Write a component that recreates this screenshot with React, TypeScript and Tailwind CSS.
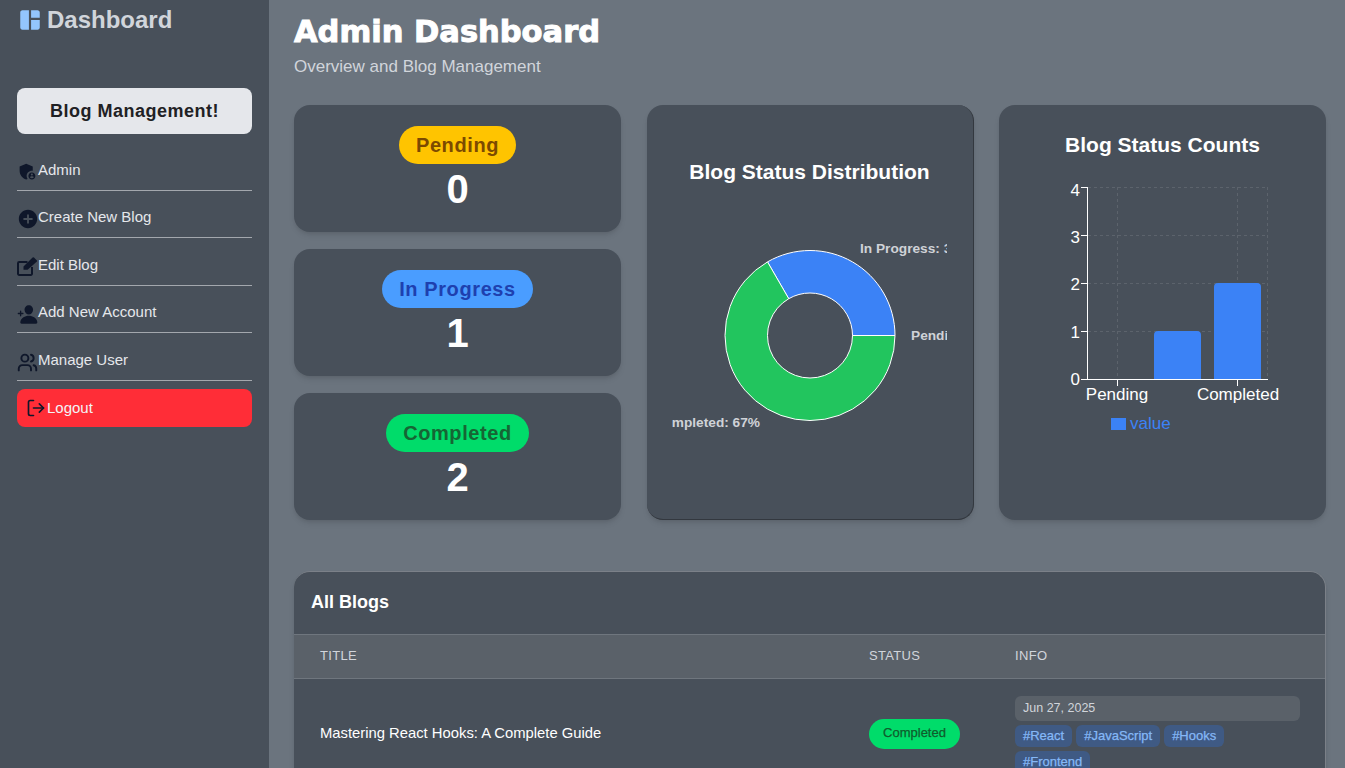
import React from "react";
import { MdSpaceDashboard, MdAdminPanelSettings, MdAddCircle } from "react-icons/md";
import { IoPersonAdd } from "react-icons/io5";
import { LuUsers, LuLogOut } from "react-icons/lu";

function EditIcon() {
  return (
    <svg viewBox="0 0 21 19" className="w-[21px] h-[19px] shrink-0" fill="none">
      <path d="M10.5 5H2.2A1.2 1.2 0 0 0 1 6.2v10.6A1.2 1.2 0 0 0 2.2 18h11.6a1.2 1.2 0 0 0 1.2-1.2V10" stroke="currentColor" strokeWidth="2" />
      <path d="M6.5 12.8V9.6L15.6.6a1 1 0 0 1 1.4 0l2.7 2.7a1 1 0 0 1 0 1.4l-9.1 8.1Z" fill="currentColor" />
    </svg>
  );
}

const menu = [
  { label: "Admin", icon: <MdAdminPanelSettings className="w-[21px] h-[21px] shrink-0" /> },
  { label: "Create New Blog", icon: <MdAddCircle className="w-[22px] h-[22px] -ml-[0.5px] -mr-[0.5px] shrink-0" /> },
  { label: "Edit Blog", icon: <EditIcon /> },
  { label: "Add New Account", icon: <IoPersonAdd className="w-[21px] h-[21px] shrink-0" /> },
  { label: "Manage User", icon: <LuUsers className="w-[21px] h-[21px] shrink-0" strokeWidth={2.2} /> },
];

const stats = [
  { label: "Pending", count: 0, pill: "bg-[#ffc400] text-[#7c4a00]" },
  { label: "In Progress", count: 1, pill: "bg-[#4a9dff] text-[#1e40af]" },
  { label: "Completed", count: 2, pill: "bg-[#00dc6a] text-[#166534]" },
];

const tags = ["#React", "#JavaScript", "#Hooks", "#Frontend"];

function Sidebar() {
  return (
    <aside className="w-[269px] shrink-0 bg-[#48505a] px-[17px]">
      <div className="flex items-center gap-[4px] h-[40px] text-[#d1d5db]">
        <MdSpaceDashboard className="w-[26px] h-[26px] text-[#93c5fd] shrink-0" />
        <span className="text-2xl font-bold">Dashboard</span>
      </div>
      <div className="mt-[48px] h-[46px] flex items-center justify-center rounded-lg bg-[#e5e7eb] text-lg font-bold tracking-[0.5px] text-[#1f2124]">
        Blog Management!
      </div>
      <div className="mt-[9px]">
        {menu.map((item) => (
          <div
            key={item.label}
            className="h-[47.6px] flex items-center border-b border-[#a3a7ad] text-[15px] text-[#e5e7eb] pt-[9px]"
          >
            <span className="text-[#0f172a] translate-y-[1px]">{item.icon}</span>
            <span className="-translate-y-[1px]">{item.label}</span>
          </div>
        ))}
      </div>
      <div className="mt-[8px] h-[38px] flex items-center gap-[1px] pl-[9px] rounded-lg bg-[#ff2d37] text-[15px] text-[#f3f4f6]">
        <LuLogOut className="w-[20px] h-[20px] text-[#0f172a] shrink-0" />
        <span>Logout</span>
      </div>
    </aside>
  );
}

function StatCard({ label, count, pill }: { label: string; count: number; pill: string }) {
  return (
    <div className="h-[127px] rounded-2xl bg-[#48505a] shadow-md flex flex-col items-center pt-[21px]">
      <span className={`h-[38px] px-[17px] flex items-center rounded-full text-xl font-bold tracking-[0.6px] ${pill}`}>
        {label}
      </span>
      <span className="text-[40px] leading-[50px] font-bold text-white">{count}</span>
    </div>
  );
}

function DonutChart() {
  return (
    <svg width="275" height="250" viewBox="672 210 275 250" className="block">
      <path d="M895 335.5A85 85 0 0 0 767.5 261.9L788.75 298.7A42.5 42.5 0 0 1 852.5 335.5Z" fill="#3b82f6" stroke="#fff" strokeWidth="1" />
      <path d="M767.5 261.9A85 85 0 1 0 895 335.5L852.5 335.5A42.5 42.5 0 1 1 788.75 298.7Z" fill="#22c55e" stroke="#fff" strokeWidth="1" />
      <g fontSize="13.7" fontWeight="700" fill="#cfd2d7" fontFamily="'Liberation Sans', sans-serif">
        <text x="860" y="253">In Progress: 33%</text>
        <text x="911" y="340">Pending: 0%</text>
        <text x="760" y="427" textAnchor="end">Completed: 67%</text>
      </g>
    </svg>
  );
}

function BarChart() {
  const gridY = [187.5, 235.5, 283.5, 331.5];
  const gridX = [1117.5, 1237.5, 1267.5];
  const yLabels = [
    { t: "4", y: 196 },
    { t: "3", y: 243 },
    { t: "2", y: 290 },
    { t: "1", y: 338 },
    { t: "0", y: 385 },
  ];
  return (
    <svg width="240" height="260" viewBox="1050 178 240 260" className="block">
      <g stroke="#5c636c" strokeDasharray="3 3">
        {gridY.map((y) => <line key={y} x1="1088" x2="1268" y1={y} y2={y} />)}
        {gridX.map((x) => <line key={x} x1={x} x2={x} y1="187" y2="379" />)}
      </g>
      <path d="M1154 379v-44a4 4 0 0 1 4-4h39a4 4 0 0 1 4 4v44Z" fill="#3b82f6" />
      <path d="M1214 379v-92a4 4 0 0 1 4-4h39a4 4 0 0 1 4 4v92Z" fill="#3b82f6" />
      <g stroke="#fff" strokeWidth="1">
        <line x1="1087.5" x2="1087.5" y1="187" y2="380" />
        <line x1="1087" x2="1268" y1="379.5" y2="379.5" />
        {[187.5, 235.5, 283.5, 331.5, 379.5].map((y) => <line key={y} x1="1081" x2="1087" y1={y} y2={y} />)}
        <line x1="1117.5" x2="1117.5" y1="380" y2="386" />
        <line x1="1237.5" x2="1237.5" y1="380" y2="386" />
      </g>
      <g fontSize="17" fill="#fff" fontFamily="'Liberation Sans', sans-serif">
        {yLabels.map((l) => (
          <text key={l.t} x="1080" y={l.y} textAnchor="end">{l.t}</text>
        ))}
        <text x="1117" y="400" textAnchor="middle">Pending</text>
        <text x="1238" y="400" textAnchor="middle">Completed</text>
      </g>
      <rect x="1111" y="418" width="15" height="12" fill="#3b82f6" />
      <text x="1130" y="429" fontSize="17" fill="#3b82f6" fontFamily="'Liberation Sans', sans-serif">value</text>
    </svg>
  );
}

export default function App() {
  return (
    <div className="h-screen flex overflow-hidden bg-[#6b747e] font-['Liberation_Sans',sans-serif]">
      <Sidebar />
      <main className="flex-1 min-w-0 pl-[25px] pr-[19px] pt-[11px]">
        <h1 className="font-['DejaVu_Sans',sans-serif] text-[30.5px] leading-[42px] font-bold text-white [-webkit-text-stroke:1px_white]">Admin Dashboard</h1>
        <p className="mt-[2px] text-[17px] leading-[24px] text-[#d1d5db]">Overview and Blog Management</p>

        <div className="mt-[26px] grid grid-cols-3 gap-[25.5px]">
          <div className="flex flex-col gap-[17px]">
            {stats.map((s) => <StatCard key={s.label} {...s} />)}
          </div>
          <div className="h-[415px] rounded-2xl bg-[#48505a] shadow-md border-r border-b border-[#33383f] flex flex-col items-center pt-[54px]">
            <h2 className="text-[21px] leading-[26px] font-bold text-white">Blog Status Distribution</h2>
            <div className="mt-[25px]"><DonutChart /></div>
          </div>
          <div className="h-[415px] rounded-2xl bg-[#48505a] shadow-md flex flex-col items-center pt-[27px]">
            <h2 className="text-[21px] leading-[26px] font-bold text-white">Blog Status Counts</h2>
            <div className="mt-[20px] self-start ml-[51px]"><BarChart /></div>
          </div>
        </div>

        <section className="mt-[51px] rounded-t-2xl bg-[#48505a] border-t border-r border-[#7b8088] shadow-md">
          <h2 className="h-[62px] pl-[17px] pb-[2px] flex items-center text-lg font-bold text-white">All Blogs</h2>
          <table className="w-full table-fixed border-collapse">
            <thead>
              <tr className="h-[44px] bg-[#5a6169] border-y border-[#6f767e] text-left text-[13px] tracking-wide text-[#d1d5db]">
                <th className="w-[549px] pl-[26px] pb-[2px] font-normal uppercase">Title</th>
                <th className="w-[146px] pl-[26px] pb-[2px] font-normal uppercase">Status</th>
                <th className="pl-[26px] pb-[2px] font-normal uppercase">Info</th>
              </tr>
            </thead>
            <tbody>
              <tr>
                <td className="pl-[26px] text-[14.8px] text-white align-middle">Mastering React Hooks: A Complete Guide</td>
                <td className="pl-[26px] align-middle">
                  <span className="inline-flex h-[30px] w-[91px] pb-[2px] items-center justify-center rounded-full bg-[#00dc6a] text-[13px] text-[#0f5c2c] [-webkit-text-stroke:0.25px_#0f5c2c]">
                    Completed
                  </span>
                </td>
                <td className="pl-[26px] pr-[25px] pt-[17px] pb-[15px] align-top">
                  <div className="h-[25px] flex items-center rounded-md bg-[#5a6169] pl-[8px] text-[12.5px] text-[#d1d5db]">Jun 27, 2025</div>
                  <div className="mt-[4px] flex flex-wrap gap-[4px]">
                    {tags.map((t) => (
                      <span key={t} className="h-[22px] pb-[1px] flex items-center rounded-md bg-[#3f5a84] px-[8px] text-[13px] text-[#85b8f7] [-webkit-text-stroke:0.25px_#85b8f7]">{t}</span>
                    ))}
                  </div>
                </td>
              </tr>
            </tbody>
          </table>
        </section>
      </main>
    </div>
  );
}
